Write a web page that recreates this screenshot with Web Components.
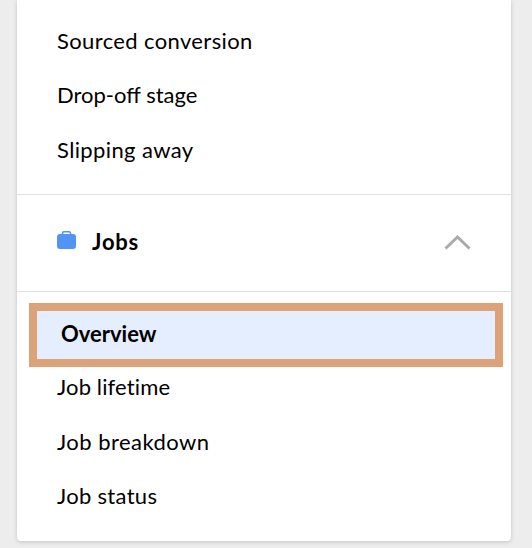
<!DOCTYPE html>
<html lang="en">
<head>
<meta charset="utf-8">
<title>Reports</title>
<style>
    body {
        margin: 0;
        height: 548px;
        overflow: hidden;
        background: #ededed;
        color: #000;
        font: 22px/30px Lato, "Open Sans", sans-serif;
    }
</style>
</head>
<body>
<side-card>
    <menu-list class="first">
        <menu-item style="letter-spacing: .37px">Sourced conversion</menu-item>
        <menu-item>Drop-off stage</menu-item>
        <menu-item style="letter-spacing: .38px">Slipping away</menu-item>
    </menu-list>
    <menu-header>Jobs</menu-header>
    <menu-list>
        <menu-item selected>Overview</menu-item>
        <menu-item style="letter-spacing: .13px">Job lifetime</menu-item>
        <menu-item style="letter-spacing: .46px">Job breakdown</menu-item>
        <menu-item style="letter-spacing: .3px">Job status</menu-item>
    </menu-list>
</side-card>

<script>
class SideCard extends HTMLElement {
    constructor(){
        super();
        this.attachShadow({ mode: 'open' });
        this.shadowRoot.innerHTML = `
            <style>
                :host {
                    display: block;
                    box-sizing: border-box;
                    width: 494px;
                    height: 541px;
                    margin-left: 17px;
                    background: #fff;
                    border-radius: 0 0 4px 4px;
                    box-shadow: 0 1px 4px rgba(0, 0, 0, .18);
                }
            </style>
            <slot></slot>
        `;
    }
}

class MenuList extends HTMLElement {
    constructor(){
        super();
        this.attachShadow({ mode: 'open' });
        this.shadowRoot.innerHTML = `
            <style>
                :host {
                    display: flex;
                    flex-direction: column;
                    box-sizing: border-box;
                    padding-top: 11px;
                }
                :host(.first) {
                    height: 194px;
                    padding-top: 14.5px;
                }
            </style>
            <slot></slot>
        `;
    }
}

class MenuItem extends HTMLElement {
    constructor(){
        super();
        this.attachShadow({ mode: 'open' });
        this.shadowRoot.innerHTML = `
            <style>
                :host {
                    display: flex;
                    align-items: center;
                    box-sizing: border-box;
                    height: 54.5px;
                    padding: 0 0 2px 40px;
                    white-space: nowrap;
                }
                /* the frame overlaps the row below a little */
                :host([selected]) {
                    height: 64px;
                    margin: 0 8px -6px 12px;
                    padding-left: 24px;
                    border: 8px solid #dba377;
                    background: #e4eeff;
                    font-weight: 700;
                }
            </style>
            <slot></slot>
        `;
    }
}

class MenuHeader extends HTMLElement {
    constructor(){
        super();
        this.attachShadow({ mode: 'open' });
        this.shadowRoot.innerHTML = `
            <style>
                :host {
                    display: flex;
                    align-items: center;
                    box-sizing: border-box;
                    height: 98px;
                    padding: 0 40px 2px;
                    border: solid #e1e1e1;
                    border-width: 1px 0;
                    font-weight: 700;
                }
                svg { display: block; }
                .label {
                    flex: 1;
                    margin-left: 15px;
                    letter-spacing: .8px;
                }
                .bag { margin-top: -5px; }
            </style>
            <svg class="bag" width="20" height="18" viewBox="0 0 20 18">
                <rect x="0" y="3" width="19" height="15" rx="3" fill="#5094f5"/>
                <path d="M5.5 3.5V2Q5.5 .8 7 .8h5Q13.5 .8 13.5 2v1.5" fill="none" stroke="#5094f5" stroke-width="1.5"/>
            </svg>
            <span class="label"><slot></slot></span>
            <svg width="27" height="16" viewBox="0 0 27 16">
                <path d="M1.5 14.5L13.5 3L25.500 14.5" fill="none" stroke="#aaa" stroke-width="3"/>
            </svg>
        `;
    }
}

customElements.define('side-card', SideCard);
customElements.define('menu-list', MenuList);
customElements.define('menu-item', MenuItem);
customElements.define('menu-header', MenuHeader);
</script>
</body>
</html>
